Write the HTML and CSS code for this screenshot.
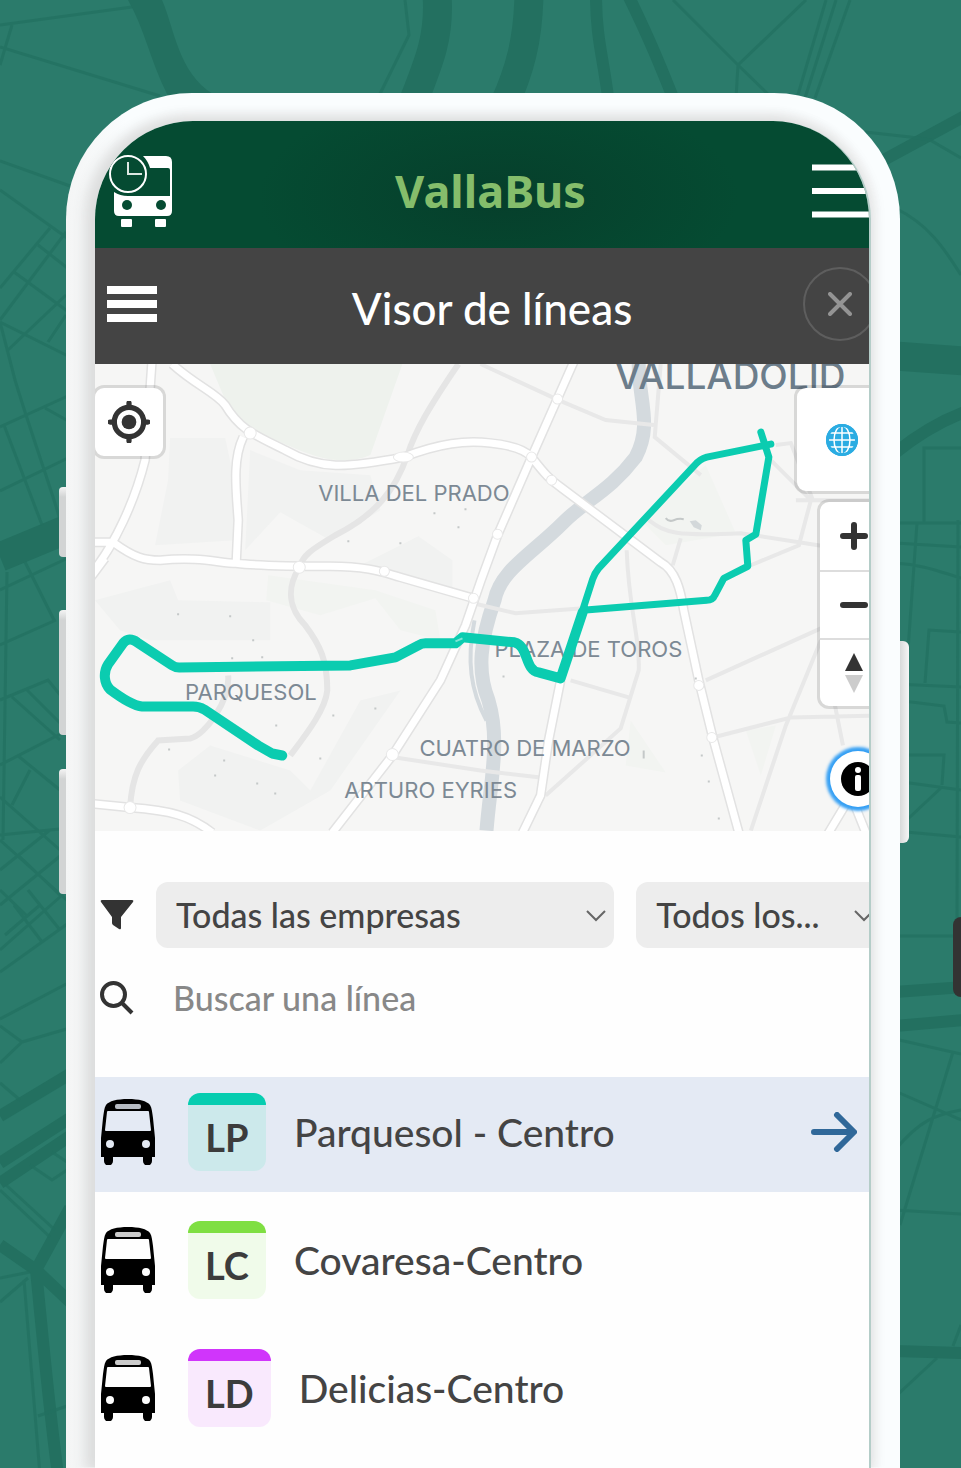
FILE: index.html
```html
<!DOCTYPE html>
<html lang="es">
<head>
<meta charset="utf-8">
<meta name="viewport" content="width=device-width, initial-scale=1">
<title>VallaBus</title>
<link rel="stylesheet" href="styles.css">
</head>
<body>
<svg width="0" height="0" class="defs" aria-hidden="true">
  <symbol id="bus" viewBox="0 0 54 66">
    <path fill="#000" d="M27 0C38 0 46 2 49 6c2 3 2 7 3 13l2 20v19h-3v4a4 4 0 0 1-9 0v-4H12v4a4 4 0 0 1-9 0v-4H0V39l2-20c1-6 1-10 3-13C8 2 16 0 27 0z"/>
    <rect class="bus-gap" x="14" y="5" width="26" height="5" rx="2" opacity=".8"/>
    <path class="bus-gap" d="M7 12h40q1 0 1 1l2 18q0 1-1 1H5q-1 0-1-1l2-18q0-1 1-1z"/>
    <circle class="bus-gap" cx="9" cy="45" r="4"/><circle class="bus-gap" cx="45" cy="45" r="4"/>
  </symbol>
</svg>
<main class="stage">
  <svg class="backdrop" viewBox="0 0 961 1468" preserveAspectRatio="xMidYMin slice" aria-hidden="true">
    <path class="fill" d="M128 0H162C175 30 178 72 213 94V110H175L167 94C150 60 145 30 128 0z"/>
    <path class="w30" d="M437-5C440 35 430 60 412 105M529-5C528 40 520 70 504 105M0 557L70 528M895 356L965 361"/>
    <path class="w13" d="M596-5C596 40 604 60 609 105M628-5C650 40 660 65 676 105M880 162L965 116M895 453Q930 425 965 412M0 1116L70 1074M0 1163L70 1118M0 1183L70 1136M0 1245L36 1270L70 1302M70 1208L36 1270C42 1330 48 1400 58 1475M895 992L965 987M895 1026L965 1020M895 1351L965 1353"/>
    <path class="w2" d="M0 25L132 7M0 47L160 96M12 25L0 65M0 161L70 186M0 190L70 240M50 228L0 288M66 232L0 320M14 272L70 313M38 245L70 270M0 322L70 357M66 295L8 350M0 322L15 380M48 342L66 315M405 0L409 35L378 98M673 0L738 65L806 0M738 65L736 98M738 65L772 98M826 0L797 98M836 0L805 98M850 0L815 98M865 132L910 137L930 140L961 158M895 208C930 225 945 250 961 275"/>
    <path class="w2" d="M961 448H924V523M895 523H961M895 543L961 547M895 563C925 565 940 572 961 578M917 523L908 650M958 520L957 925M961 632L929 630L925 683M895 684L961 687M895 700L944 706L947 722L961 723M905 755H944L942 785M895 781L961 790M942 787L895 831M895 831L961 837M895 936H961M895 1039L961 1054M953 1052L900 1225M895 1091L961 1120M895 1150C920 1120 935 1115 961 1110M895 1210L961 1214M961 1325L953 1346M937 1358L895 1397"/>
    <path class="w2" d="M15 380C30 430 55 500 60 520M4 425L42 525M0 427L70 395M0 491L70 457M45 408L70 422M0 590L70 557M25 562L54 620M7 572L3 840M0 645L56 620M0 700L48 680L70 707M12 697L60 740M27 690L70 733M0 765L70 729M17 755L60 790M30 770L12 805M0 797L60 850M0 835L70 828M0 840L70 903M0 870L50 830M0 905L70 848M18 855L62 897M0 972L70 922M5 935L40 905M0 950L60 897M14 905L42 942M28 890L60 930M0 890L26 915M0 1019L70 982M0 1026L22 1042L70 1028M0 1063L22 1042M0 1083L20 1100M30 1165L52 1180L70 1168M52 1152L70 1164M0 1190L50 1237M6 1185L55 1230M24 1280L40 1475M0 1302L28 1278M0 1278L30 1272M38 1416L70 1405"/>
  </svg>

  <div class="phone">
    <span class="key key-mute"></span>
    <span class="key key-up"></span>
    <span class="key key-down"></span>
    <span class="key key-power"></span>
    <div class="screen">
      <div class="app">
        <header class="topbar">
          <svg class="logo" viewBox="0 0 64 72" role="img" aria-label="VallaBus">
            <g fill="#fff">
              <path d="M34 1H57Q63 1 63 7V42H61V15Q61 13 59 13H41Q39 6 34 1z"/>
              <path d="M5 37Q11 41 19 41H63V56Q63 61 58 61H10Q5 61 5 56z"/>
              <rect x="12" y="64" width="11" height="8" rx="1"/><rect x="46" y="64" width="11" height="8" rx="1"/>
            </g>
            <circle cx="18" cy="50" r="5" fill="#054b32"/><circle cx="52" cy="50" r="5" fill="#054b32"/>
            <path d="M19 7V19H33" fill="none" stroke="#dce8e2" stroke-width="2"/>
            <circle cx="19" cy="19" r="18" fill="none" stroke="#fff" stroke-width="2"/>
          </svg>
          <h1 class="brand">VallaBus</h1>
          <button class="plain" aria-label="Menú">
            <svg class="burger" viewBox="0 0 60 54"><path d="M0 3.500H60M0 27H60M0 50.500H60" stroke="#fff" stroke-width="6"/></svg>
          </button>
        </header>

        <div class="subbar">
          <button class="plain" aria-label="Opciones">
            <svg class="menu" viewBox="0 0 50 36"><path d="M0 4H50M0 18H50M0 32H50" stroke="#fff" stroke-width="8"/></svg>
          </button>
          <h2 class="subtitle">Visor de líneas</h2>
          <button class="close" aria-label="Cerrar">
            <svg viewBox="0 0 24 24"><path d="M2 2L22 22M22 2L2 22" stroke="#949494" stroke-width="4" stroke-linecap="round"/></svg>
          </button>
        </div>

        <section class="map" aria-label="Mapa">
          <svg class="map-canvas" viewBox="95 364 790 466" preserveAspectRatio="xMinYMin slice">
            <path class="park" d="M210 364H402L370 455C335 470 300 450 275 440L240 425L225 400z"/>
            <path class="area" d="M170 438H225L232 470L235 540L155 545L168 480zM250 450L300 470L370 475L380 510L330 540L280 512L245 550zM360 565L418 536L452 560V588zM95 600L170 580L178 600L270 602V640L150 640L120 630zM180 800L178 770L210 745L290 770L310 790L360 700L400 690L330 790L260 830z"/>
            <path class="park park-pale" d="M268 575L375 590L435 610L440 640L400 630L375 598L320 615L266 600zM665 545L640 520L705 465L735 533zM630 720L665 772L625 765zM745 730L775 725L760 775z"/>
            <path class="river" d="M638 364C638 400 652 425 635 457C610 490 585 500 563 522C530 555 500 570 494 600C480 640 476 670 488 700C500 740 490 780 486 830"/>
            <path class="river-thin" d="M474 620C466 660 470 690 486 720"/>
            <path class="minor" d="M458 364C430 405 415 430 407 455C395 490 375 515 335 535C310 550 303 555 299 567C285 590 290 610 305 625C320 645 327 660 327 690C325 710 305 735 290 755M228 675C230 700 205 735 190 738L158 740C140 760 132 775 130 807"/>
            <path class="lane" d="M480 364L558 400L605 420L653 425M660 364L654 437L700 475M648 520C665 533 675 536 740 533L830 547M680 538L672 565M626 550C628 610 640 640 638 670L620 728L545 795M570 680L628 697M473 603L515 613L583 608M705 680L820 628M712 737L790 717L886 715M820 640L785 725L750 830M834 705L842 745M775 445L790 443L812 500M770 460L810 500L798 545L750 565M795 500H886M395 757L480 770L540 777"/>
            <g id="roads">
              <path class="casing" d="M172 364C195 385 215 392 225 405C240 430 255 435 285 450C320 470 345 468 403 457C440 443 465 440 490 443C510 445 525 450 531 457C545 475 550 480 560 487L660 562C675 570 680 590 683 610L698 680L712 737L738 832M152 360L145 460C135 500 115 545 90 575M90 578L105 558M90 542H113C135 558 145 560 160 560C200 556 220 563 236 563C260 566 300 566 330 566C370 566 385 573 400 577L473 598M243 437C232 460 236 490 238 520L236 563M574 360L531 457L497 535C480 580 475 595 465 625L440 680L392 755L332 832M560 680L548 740L540 795L522 832M90 803L130 807C170 810 190 815 212 832M826 835L850 795L866 835"/>
              <path class="road" d="M172 364C195 385 215 392 225 405C240 430 255 435 285 450C320 470 345 468 403 457C440 443 465 440 490 443C510 445 525 450 531 457C545 475 550 480 560 487L660 562C675 570 680 590 683 610L698 680L712 737L738 832M152 360L145 460C135 500 115 545 90 575M90 578L105 558M90 542H113C135 558 145 560 160 560C200 556 220 563 236 563C260 566 300 566 330 566C370 566 385 573 400 577L473 598M243 437C232 460 236 490 238 520L236 563M574 360L531 457L497 535C480 580 475 595 465 625L440 680L392 755L332 832M560 680L548 740L540 795L522 832M90 803L130 807C170 810 190 815 212 832M826 835L850 795L866 835"/>
            </g>
            <g class="nodes"><ellipse cx="403" cy="457" rx="10" ry="5"/><circle cx="250" cy="433" r="6"/><circle cx="299" cy="567" r="6"/><circle cx="384" cy="571" r="5"/><circle cx="531" cy="457" r="5"/><circle cx="557" cy="399" r="5"/><circle cx="551" cy="480" r="5"/><circle cx="497" cy="534" r="5"/><circle cx="473" cy="598" r="5"/><circle cx="698" cy="685" r="5"/><circle cx="711" cy="737" r="5"/><circle cx="392" cy="754" r="6"/><circle cx="130" cy="807" r="6"/></g>
            <path class="specks" d="M178 613v2M229 616h2M252 640h2M231 658h2M261 657h2M332 715h2M374 708h2M320 757v2M275 725h2M168 749h2M224 759v2M256 783h2M214 775h2M274 793h2M399 543h2M433 513h2M457 527h2M347 541h2M465 508v2M503 675v2M695 677v2M700 755h2M707 781h2M717 818h2M643 750v8"/>
            <path class="specks" d="M665 518q3 4 8 2t10-1"/>
            <path fill="#d3d8da" d="M689 521l6-1l6 5l-1 5l-7-3z"/>
            <g class="places">
              <text x="318" y="501">VILLA DEL PRADO</text>
              <text x="185" y="700">PARQUESOL</text>
              <text x="494" y="657">PLAZA DE TOROS</text>
              <text x="419" y="756">CUATRO DE MARZO</text>
              <text x="344" y="797">ARTURO EYRIES</text>
              <text class="city" x="614" y="389">VALLADOLID</text>
            </g>
            <path class="route" d="M282 755L272 753L258 745L204 709Q199 706 193 706H142C132 705 118 695 110 689C104 683 103 672 108 664L123 643Q129 636 137 642L172 665Q175 667 179 667L350 665L395 657L418 645Q421 643 425 643L455 643L462 637L514 642C528 645 524 670 538 672L560 678L582 612"/>
            <path d="M455 641L462 638" stroke="#7fe3d4" stroke-width="2"/>
            <path class="route-thin" d="M582 610L592 579Q594 573 598 568L694 465Q699 459 706 457L770 444M760 432L768 457L755 534L745 540L747 566L723 578L714 595Q712 600 706 600L582 610"/>
          </svg>
          <button class="tool locate" aria-label="Mi ubicación">
            <svg viewBox="0 0 40 40"><circle cx="20" cy="20" r="7" fill="#333"/><circle cx="20" cy="20" r="14" fill="none" stroke="#333" stroke-width="5"/><path d="M20 2V6M20 34V38M2 20H6M34 20H38" stroke="#333" stroke-width="5" stroke-linecap="round"/></svg>
          </button>
          <button class="tool globe" aria-label="Capas">
            <svg viewBox="0 0 32 32"><circle cx="16" cy="16" r="16" fill="#2bace2"/><path d="M4 9H28M1 16H31M4 23H28M16 1V31" stroke="#fff" stroke-width="1.500"/><ellipse cx="16" cy="16" rx="8" ry="14" fill="none" stroke="#fff" stroke-width="1.500"/><circle cx="16" cy="16" r="14.500" fill="none" stroke="#2bace2" stroke-width="3"/></svg>
          </button>
          <div class="tool zoom">
            <button aria-label="Acercar"><svg viewBox="0 0 28 28"><path d="M14 3V25M3 14H25" stroke="#333" stroke-width="6" stroke-linecap="round"/></svg></button>
            <button aria-label="Alejar"><svg viewBox="0 0 28 28"><path d="M3 14H25" stroke="#333" stroke-width="6" stroke-linecap="round"/></svg></button>
            <button aria-label="Orientar al norte"><svg class="compass" viewBox="0 0 28 40"><path d="M14 0L23 18H5z" fill="#333"/><path d="M14 40L23 22H5z" fill="#ccc"/></svg></button>
          </div>
          <button class="info" aria-label="Información">
            <svg viewBox="0 0 34 34"><circle cx="17" cy="17" r="17"/><rect x="14" y="13" width="6" height="16" rx="2" fill="#fff"/><rect x="14" y="5" width="6" height="6" rx="3" fill="#fff"/></svg>
          </button>
        </section>

        <form class="filters">
          <div class="filter-row">
            <svg class="glyph" viewBox="0 0 34 34"><path fill="#333" d="M2 2H32Q34 2 33 4L21 19V30Q21 32 19 31L13 27Q12 26 12 25V19L1 4Q0 2 2 2z"/></svg>
            <div class="pick pick-wide">
              <select aria-label="Empresa"><option>Todas las empresas</option></select>
              <svg viewBox="0 0 20 12"><path d="M1 1L10 10L19 1"/></svg>
            </div>
            <div class="pick">
              <select aria-label="Tipo"><option>Todos los...</option></select>
              <svg viewBox="0 0 20 12"><path d="M1 1L10 10L19 1"/></svg>
            </div>
          </div>
          <div class="filter-row">
            <svg class="glyph" viewBox="0 0 34 34"><circle cx="13.500" cy="13.500" r="11.500" fill="none" stroke="#333" stroke-width="4"/><path d="M22 22L32 32" stroke="#333" stroke-width="4"/></svg>
            <input class="search" type="text" aria-label="Buscar una línea" placeholder="Buscar una línea">
          </div>
        </form>

        <ul class="lines">
          <li class="line line-active">
            <svg class="bus"><use href="#bus"/></svg>
            <span class="badge badge-lp">LP</span>
            <span class="name">Parquesol - Centro</span>
            <svg class="arrow" viewBox="0 0 46 40"><path d="M3 20H42M26 3L43 20L26 37"/></svg>
          </li>
          <li class="line">
            <svg class="bus"><use href="#bus"/></svg>
            <span class="badge badge-lc">LC</span>
            <span class="name">Covaresa-Centro</span>
          </li>
          <li class="line">
            <svg class="bus"><use href="#bus"/></svg>
            <span class="badge badge-ld">LD</span>
            <span class="name">Delicias-Centro</span>
          </li>
        </ul>
      </div>
    </div>
  </div>
  <span class="side-tab"></span>
</main>
</body>
</html>
```
FILE: styles.css
```css
* { box-sizing: border-box; }

body {
  margin: 0;
  background: #2b7b6b;
  color: #444;
  font-family: Lato, "Open Sans", sans-serif;
  font-weight: 500;
}

button, select, input { font: inherit; color: inherit; }

button {
  display: grid;
  place-items: center;
  margin: 0;
  padding: 0;
  border: 0;
  background: none;
}

.defs { position: absolute; }

.stage {
  position: relative;
  min-height: 100vh;
  padding: 93px 61px 0 66px;
  overflow: hidden;
}

/* Street pattern behind the phone */
.backdrop {
  position: absolute;
  inset: 0;
  width: 100%;
  height: 100%;
  fill: none;
  stroke: #237060;
}
.backdrop .fill { fill: #237060; stroke: none; }
.w30 { stroke-width: 29; }
.w13 { stroke-width: 12; }
.w2 { stroke-width: 3; opacity: .75; }

/* Phone body */
.phone {
  position: relative;
  padding: 28px 29px 0;
  border-radius: 126px 126px 0 0;
  background: linear-gradient(90deg, #f4f5f5, #fafdfe 60px);
}
.screen {
  position: relative;
  overflow: hidden;
  border-right: 2px solid #b4cdc8;
  border-radius: 98px 98px 0 0;
  background: #fefefe;
}
.phone::before {
  content: "";
  position: absolute;
  inset: 28px 29px 0;
  border-radius: 98px 98px 0 0;
  box-shadow: -6px 0 14px 4px #dcdddd, 0 0 14px 3px #e9e9e9;
  clip-path: inset(-28px -29px 0);
}
.key {
  position: absolute;
  left: -7px;
  width: 7px;
  border-radius: 4px 0 0 4px;
  background: linear-gradient(#f4f4f4, #d2d4d4 10px);
}
.key-mute { top: 394px; height: 70px; }
.key-up { top: 517px; height: 125px; }
.key-down { top: 676px; height: 125px; }
.key-power {
  top: 548px;
  right: -9px;
  left: auto;
  width: 9px;
  height: 202px;
  border-radius: 0 6px 6px 0;
  background: linear-gradient(90deg, #d8dada, #f6f6f6);
}
.side-tab {
  position: absolute;
  top: 917px;
  right: 0;
  width: 8px;
  height: 80px;
  border-radius: 8px 0 0 8px;
  background: #333;
}

/* The app is slightly wider than the visible screen */
.app { margin-right: -17px; }

.topbar, .subbar {
  display: grid;
  grid-template-columns: 1fr auto 1fr;
  align-items: center;
  padding: 12px 14px 0;
}
.topbar {
  min-height: 127px;
  background: radial-gradient(ellipse 240px 110px at 51% 60%, #063f2b, #054b32);
}
.topbar > :last-child, .subbar > :last-child { justify-self: end; }
.subbar > :first-child { justify-self: start; }
.logo { width: 64px; height: 72px; }
.brand {
  margin: 0;
  color: #85bd6b;
  font: 700 45px/56px "Noto Sans", sans-serif;
}
.burger { display: block; width: 60px; height: 54px; }
.subbar {
  min-height: 116px;
  padding: 0 9px 4px 12px;
  background: #444;
}
.menu { display: block; width: 50px; height: 36px; }
.subtitle {
  margin: 8px 0 0;
  color: #fff;
  font-size: 44px;
  font-weight: 500;
  line-height: 52px;
}
.close {
  width: 74px;
  height: 74px;
  border: 2px solid #5e5e5e;
  border-radius: 50%;
}
.close svg { width: 24px; height: 24px; }

/* Map */
.map {
  position: relative;
  aspect-ratio: 790 / 466;
  overflow: hidden;
  background: #f6f6f5;
}
.map-canvas { display: block; width: 100%; height: 100%; fill: none; }
.park { fill: #eef2ed; }
.park-pale { fill: #f2f4f1; }
.area { fill: #f1f2f1; }
.river { stroke: #d4dade; stroke-width: 14; }
.river-thin { stroke: #d4dade; stroke-width: 4; }
.minor { stroke: #e5e5e5; stroke-width: 6; }
.lane { stroke: #e8e8e8; stroke-width: 4; }
.casing { stroke: #e2e2e2; stroke-width: 10; }
.road { stroke: #fff; stroke-width: 7; }
.nodes { fill: #fff; stroke: #e8e8e8; }
.specks { stroke: #c4c8c8; stroke-width: 2; }
.places { fill: #7c8994; font: 400 22px Inter, sans-serif; }
.city { fill: #6c7d8b; font-size: 37px; font-weight: 500; }
.route, .route-thin {
  stroke: #0bccb0;
  stroke-width: 10;
  stroke-linecap: round;
  stroke-linejoin: round;
}
.route-thin { stroke-width: 7; }

.tool {
  position: absolute;
  border: 3px solid #0000001f;
  border-radius: 12px;
  background: #fff;
  background-clip: padding-box;
}
.locate { top: 21px; left: -3px; width: 74px; height: 74px; }
.locate svg { width: 42px; height: 42px; }
.globe { top: 21px; right: -4px; width: 96px; height: 109px; }
.globe svg { width: 32px; height: 32px; }
.zoom { top: 135px; right: -4px; width: 73px; }
.zoom button { width: 100%; height: 68px; }
.zoom button + button { border-top: 2px solid #ddd; }
.zoom svg { width: 28px; height: 28px; }
.zoom .compass { height: 40px; }
.info {
  position: absolute;
  right: 0;
  bottom: 24px;
  width: 56px;
  height: 56px;
  border-radius: 50%;
  background: #fff;
  box-shadow: 0 0 3px 4px #36a0f4;
}
.info svg { width: 34px; height: 34px; }

/* Filters */
.filters {
  display: grid;
  gap: 18px;
  padding: 51px 0 47px 5px;
  font-size: 34px;
}
.filter-row { display: flex; align-items: center; gap: 22px; }
.glyph { flex: none; width: 34px; height: 34px; }
.pick { position: relative; flex: 6 1 0; min-width: 0; }
.pick-wide { flex-grow: 11; }
.pick select {
  width: 100%;
  height: 66px;
  padding: 0 20px;
  border: 0;
  border-radius: 12px;
  background: #ededed;
  appearance: none;
}
.pick svg {
  position: absolute;
  top: 28px;
  right: 8px;
  width: 20px;
  height: 12px;
  fill: none;
  stroke: #666;
  stroke-width: 2;
  pointer-events: none;
}
.pick:last-child svg { right: 12px; }
.search {
  flex: 1;
  min-width: 0;
  height: 64px;
  padding: 0 17px;
  border: 0;
  background: none;
}
.search::placeholder { color: #888; opacity: 1; }

/* Lines */
.lines {
  display: grid;
  gap: 13px;
  margin: 0;
  padding: 0 0 20px;
  list-style: none;
}
.line {
  display: flex;
  align-items: center;
  min-height: 115px;
  padding: 0 29px 4px 6px;
}
.line-active { --gap: #e4eaf4; background: #e4eaf4; }
.bus { flex: none; width: 54px; height: 66px; margin-right: 33px; }
.bus-gap { fill: var(--gap, #fefefe); }
.badge {
  min-width: 78px;
  padding: 12px 17px 2px;
  border-radius: 12px;
  color: #3c3c3c;
  font-size: 38px;
  font-weight: 700;
  line-height: 64px;
  text-align: center;
}
.badge-lp { background: linear-gradient(#06cdb0 12px, #cce9eb 12px); }
.badge-lc { background: linear-gradient(#7fdf42 12px, #f0fbea 12px); }
.badge-ld { background: linear-gradient(#d035fb 12px, #f9e9fd 12px); }
.name { flex: 1; margin-left: 28px; font-size: 39px; line-height: 48px; }
.arrow {
  flex: none;
  width: 46px;
  height: 40px;
  fill: none;
  stroke: #306899;
  stroke-width: 6;
  stroke-linecap: round;
  stroke-linejoin: round;
}
```
